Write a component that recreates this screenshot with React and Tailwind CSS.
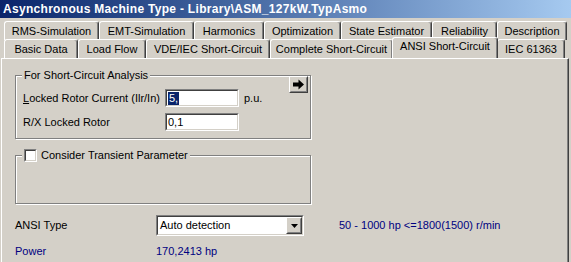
import React from 'react';

const font = { fontFamily: '"Liberation Sans", Arial, sans-serif' };

const row1 = [
  { label: 'RMS-Simulation', w: 95 },
  { label: 'EMT-Simulation', w: 95 },
  { label: 'Harmonics', w: 70 },
  { label: 'Optimization', w: 77 },
  { label: 'State Estimator', w: 91 },
  { label: 'Reliability', w: 65 },
  { label: 'Description', w: 70 },
];

const row2 = [
  { label: 'Basic Data', w: 74 },
  { label: 'Load Flow', w: 68 },
  { label: 'VDE/IEC Short-Circuit', w: 124 },
  { label: 'Complete Short-Circuit', w: 123 },
  { label: 'ANSI Short-Circuit', w: 106, active: true },
  { label: 'IEC 61363', w: 68 },
];

const Tab = ({ label, w, active }) => (
  <div
    style={{ width: w }}
    className={`flex items-center justify-center rounded-t-[3px] border-l border-t border-white border-r border-r-[#404040] bg-[#d4d0c8] shadow-[inset_-1px_0_0_#808080] text-[11px] text-black ${
      active ? 'relative z-10 -mx-[1px] h-[21px] pb-[3px]' : 'h-[19px] pt-[1px]'
    }`}
  >
    {label}
  </div>
);

const GroupBox = ({ title, className, children }) => (
  <div className={`relative border border-[#808080] shadow-[inset_1px_1px_0_#fff,1px_1px_0_#fff] ${className}`}>
    <div className="absolute -top-[8px] left-[6px] flex items-center bg-[#d4d0c8] px-[2px] text-[11px] leading-[14px]">
      {title}
    </div>
    {children}
  </div>
);

const Sunken = ({ className, children }) => (
  <div className={`border border-t-[#808080] border-l-[#808080] border-b-white border-r-white ${className}`}>
    <div className="h-full w-full border border-t-[#404040] border-l-[#404040] border-b-[#d4d0c8] border-r-[#d4d0c8] bg-white">
      {children}
    </div>
  </div>
);

const Raised = ({ className, children }) => (
  <div className={`border border-t-white border-l-white border-b-[#404040] border-r-[#404040] ${className}`}>
    <div className="flex h-full w-full items-center justify-center border border-transparent border-b-[#808080] border-r-[#808080] bg-[#d4d0c8]">
      {children}
    </div>
  </div>
);

export default function App() {
  return (
    <div style={font} className="h-[262px] w-[571px] overflow-hidden bg-[#d4d0c8] text-[11px] text-black">
      {/* title bar */}
      <div className="flex h-[18px] items-center bg-gradient-to-r from-[#0a246a] to-[#a6caf0] pl-[3px] text-[12px] font-bold tracking-[0.3px] text-white">
        Asynchronous Machine Type - Library\ASM_127kW.TypAsmo
      </div>

      {/* tabs */}
      <div className="pl-[4px] pt-[3px]">
        <div className="flex">
          {row1.map((t) => (
            <Tab key={t.label} {...t} />
          ))}
        </div>
        <div className="flex h-[18px] items-end">
          {row2.map((t) => (
            <Tab key={t.label} {...t} />
          ))}
        </div>
      </div>

      {/* panel */}
      <div className="ml-[1px] mr-[2px] h-[210px] border-l border-t border-white border-r border-r-[#404040] shadow-[inset_-1px_0_0_#808080] pl-[13px] pt-[16px]">
        <GroupBox title="For Short-Circuit Analysis" className="h-[64px] w-[296px]">
          <div className="flex justify-end pr-[2px]">
            <Raised className="h-[17px] w-[19px]">
              <svg width="13" height="11" viewBox="0 0 13 11">
                <path d="M1 3.5h5.5V0.5L12 5.5l-5.5 5v-3H1z" fill="#000" />
              </svg>
            </Raised>
          </div>
          <div className="-mt-[4px] flex items-center pl-[7px]">
            <span className="w-[142px]">
              <span className="underline">L</span>ocked Rotor Current (Ilr/In)
            </span>
            <Sunken className="h-[18px] w-[74px]">
              <div className="flex h-full items-center pl-[1px]">
                <span className="bg-[#0a246a] px-[1px] leading-[13px] text-white">5,</span>
              </div>
            </Sunken>
            <span className="pl-[5px]">p.u.</span>
          </div>
          <div className="mt-[6px] flex items-center pl-[7px]">
            <span className="w-[142px]">R/X Locked Rotor</span>
            <Sunken className="h-[18px] w-[74px]">
              <div className="flex h-full items-center pl-[1px]">0,1</div>
            </Sunken>
          </div>
        </GroupBox>

        <GroupBox
          title={
            <>
              <Sunken className="mr-[4px] h-[13px] w-[13px]" />
              <span>Consider Transient Parameter</span>
            </>
          }
          className="mt-[16px] h-[49px] w-[296px]"
        />

        <div className="mt-[11px] flex items-center">
          <span className="w-[141px]">ANSI Type</span>
          <Sunken className="h-[21px] w-[148px]">
            <div className="flex h-full items-center justify-between pl-[2px]">
              <span>Auto detection</span>
              <Raised className="h-[17px] w-[16px]">
                <svg width="7" height="4" viewBox="0 0 7 4">
                  <path d="M0 0h7L3.5 4z" fill="#000" />
                </svg>
              </Raised>
            </div>
          </Sunken>
          <span className="pl-[35px] text-[#000080]">50 - 1000 hp &lt;=1800(1500) r/min</span>
        </div>

        <div className="mt-[7px] flex items-center text-[#000080]">
          <span className="w-[141px]">Power</span>
          <span>170,2413 hp</span>
        </div>
      </div>
    </div>
  );
}
